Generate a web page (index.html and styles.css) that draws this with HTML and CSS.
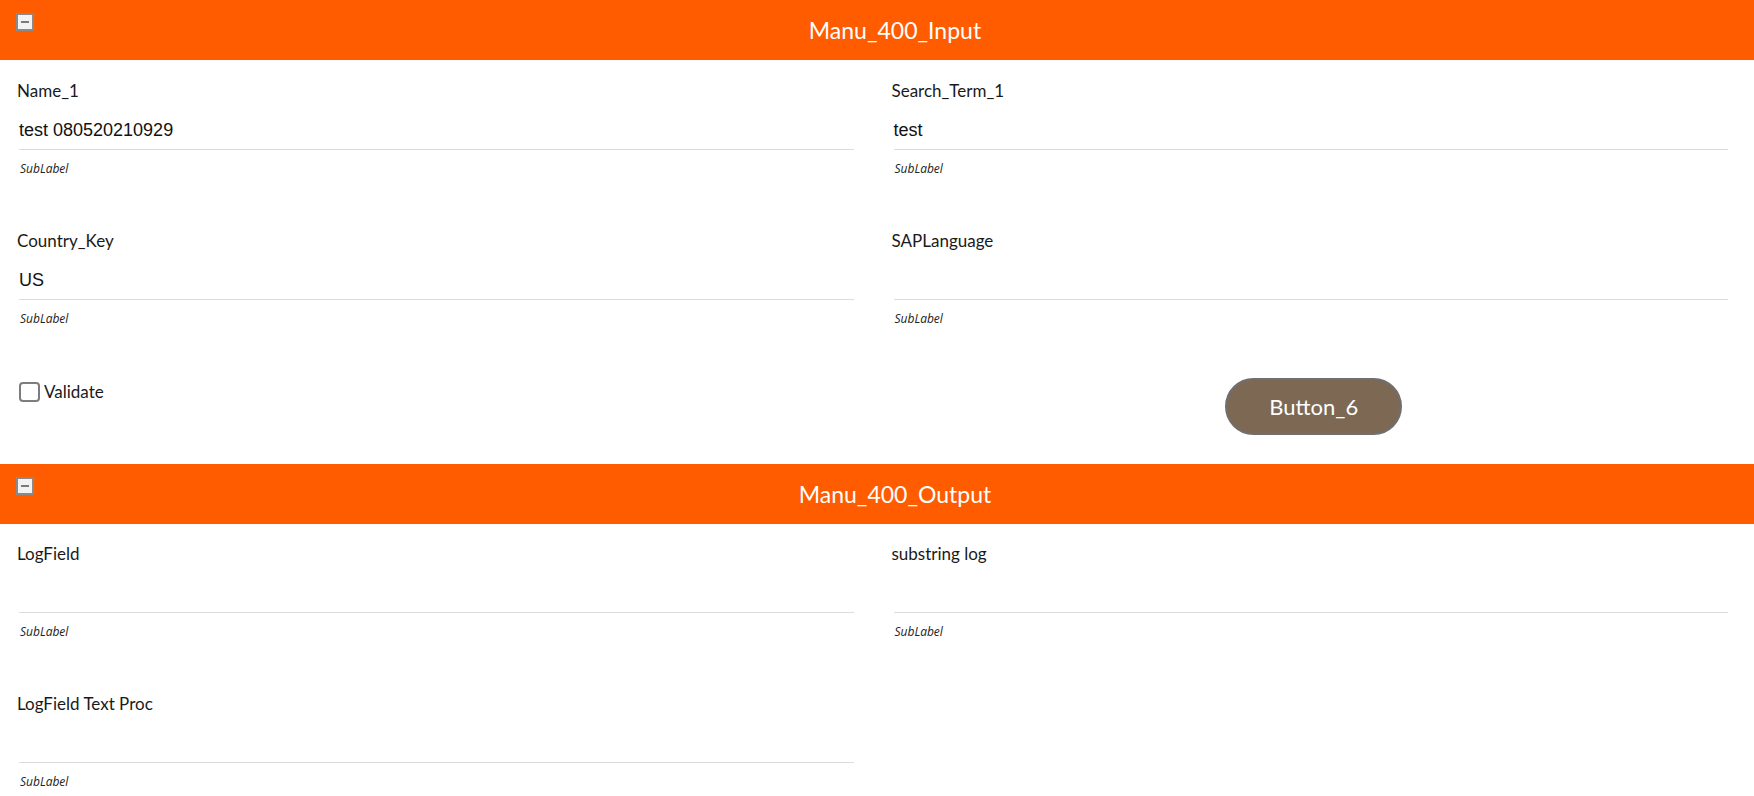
FILE: index.html
```html
<!DOCTYPE html>
<html>
<head>
<meta charset="utf-8">
<link rel="stylesheet" href="styles.css">
</head>
<body>
<section class="panel panel-input">
  <header class="panel-head">
    <span class="toggle"><span class="minus"></span></span>
    <h1 class="panel-title">Manu_400_Input</h1>
  </header>
  <div class="panel-body">
    <div class="field">
      <div class="label">Name_1</div>
      <div class="value">test 080520210929</div>
      <div class="sublabel">SubLabel</div>
    </div>
    <div class="field">
      <div class="label">Search_Term_1</div>
      <div class="value">test</div>
      <div class="sublabel">SubLabel</div>
    </div>
    <div class="field">
      <div class="label">Country_Key</div>
      <div class="value">US</div>
      <div class="sublabel">SubLabel</div>
    </div>
    <div class="field">
      <div class="label">SAPLanguage</div>
      <div class="value"></div>
      <div class="sublabel">SubLabel</div>
    </div>
    <div class="check-cell">
      <label class="check"><span class="box"></span><span class="check-text">Validate</span></label>
    </div>
    <div class="button-cell">
      <button class="btn">Button_6</button>
    </div>
  </div>
</section>
<section class="panel panel-output">
  <header class="panel-head">
    <span class="toggle"><span class="minus"></span></span>
    <h1 class="panel-title">Manu_400_Output</h1>
  </header>
  <div class="panel-body">
    <div class="field">
      <div class="label">LogField</div>
      <div class="value"></div>
      <div class="sublabel">SubLabel</div>
    </div>
    <div class="field">
      <div class="label">substring log</div>
      <div class="value"></div>
      <div class="sublabel">SubLabel</div>
    </div>
    <div class="field">
      <div class="label">LogField Text Proc</div>
      <div class="value"></div>
      <div class="sublabel">SubLabel</div>
    </div>
  </div>
</section>
</body>
</html>
```
FILE: styles.css
```css
html, body {
  margin: 0;
  padding: 0;
  background: #ffffff;
}
body {
  font-family: Lato, "Open Sans", sans-serif;
  color: #1a1a1a;
}
.panel-head {
  display: flex;
  align-items: flex-start;
  height: 60px;
  background: #ff5c00;
}
.toggle {
  box-sizing: border-box;
  width: 18px;
  height: 18px;
  margin: 13px 0 0 16px;
  background: #f2f2f2;
  border: 2px solid #8a8a8a;
  display: flex;
  align-items: center;
  justify-content: center;
}
.minus {
  width: 8px;
  height: 2px;
  background: #7a7a7a;
}
.panel-title {
  flex: 1;
  margin: 0;
  text-align: center;
  color: #ffffff;
  font-weight: 400;
  font-size: 23px;
  line-height: 60px;
  padding-left: 2px;
}
.panel-body {
  display: grid;
  grid-template-columns: 1fr 1fr;
  column-gap: 36px;
  row-gap: 54px;
  padding: 21px 24px 29px 17px;
}
.panel-output .panel-body {
  padding-top: 20px;
}
.label {
  font-size: 17px;
  line-height: 20px;
  height: 20px;
  white-space: nowrap;
}
.value {
  margin: 0 2px;
  padding: 18px 0 8px;
  height: 22px;
  line-height: 22px;
  font-family: "Liberation Sans", Arial, sans-serif;
  font-size: 18px;
  color: #111;
  border-bottom: 1px solid #dcdcdc;
}
.sublabel {
  margin: 11px 3px 0;
  font-family: "Open Sans", sans-serif;
  font-size: 12px;
  line-height: 16px;
  font-style: italic;
  color: #222;
}
.check-cell {
  margin-top: -3px;
  padding-top: 4px;
}
.check {
  display: inline-flex;
  align-items: center;
  gap: 4px;
  margin-left: 2px;
}
.box {
  box-sizing: border-box;
  width: 21px;
  height: 20px;
  border: 2px solid #7d7d7d;
  border-radius: 4px;
  background: #fff;
}
.check-text {
  font-size: 17px;
  line-height: 20px;
}
.button-cell {
  display: flex;
  justify-content: center;
  margin-top: -3px;
  padding-left: 6px;
}
.btn {
  box-sizing: border-box;
  width: 177px;
  height: 57px;
  border-radius: 29px;
  border: 2px solid #6f6f6f;
  background: #7d6854;
  color: #ffffff;
  font-family: Lato, "Open Sans", sans-serif;
  font-size: 22px;
  cursor: pointer;
}
```
